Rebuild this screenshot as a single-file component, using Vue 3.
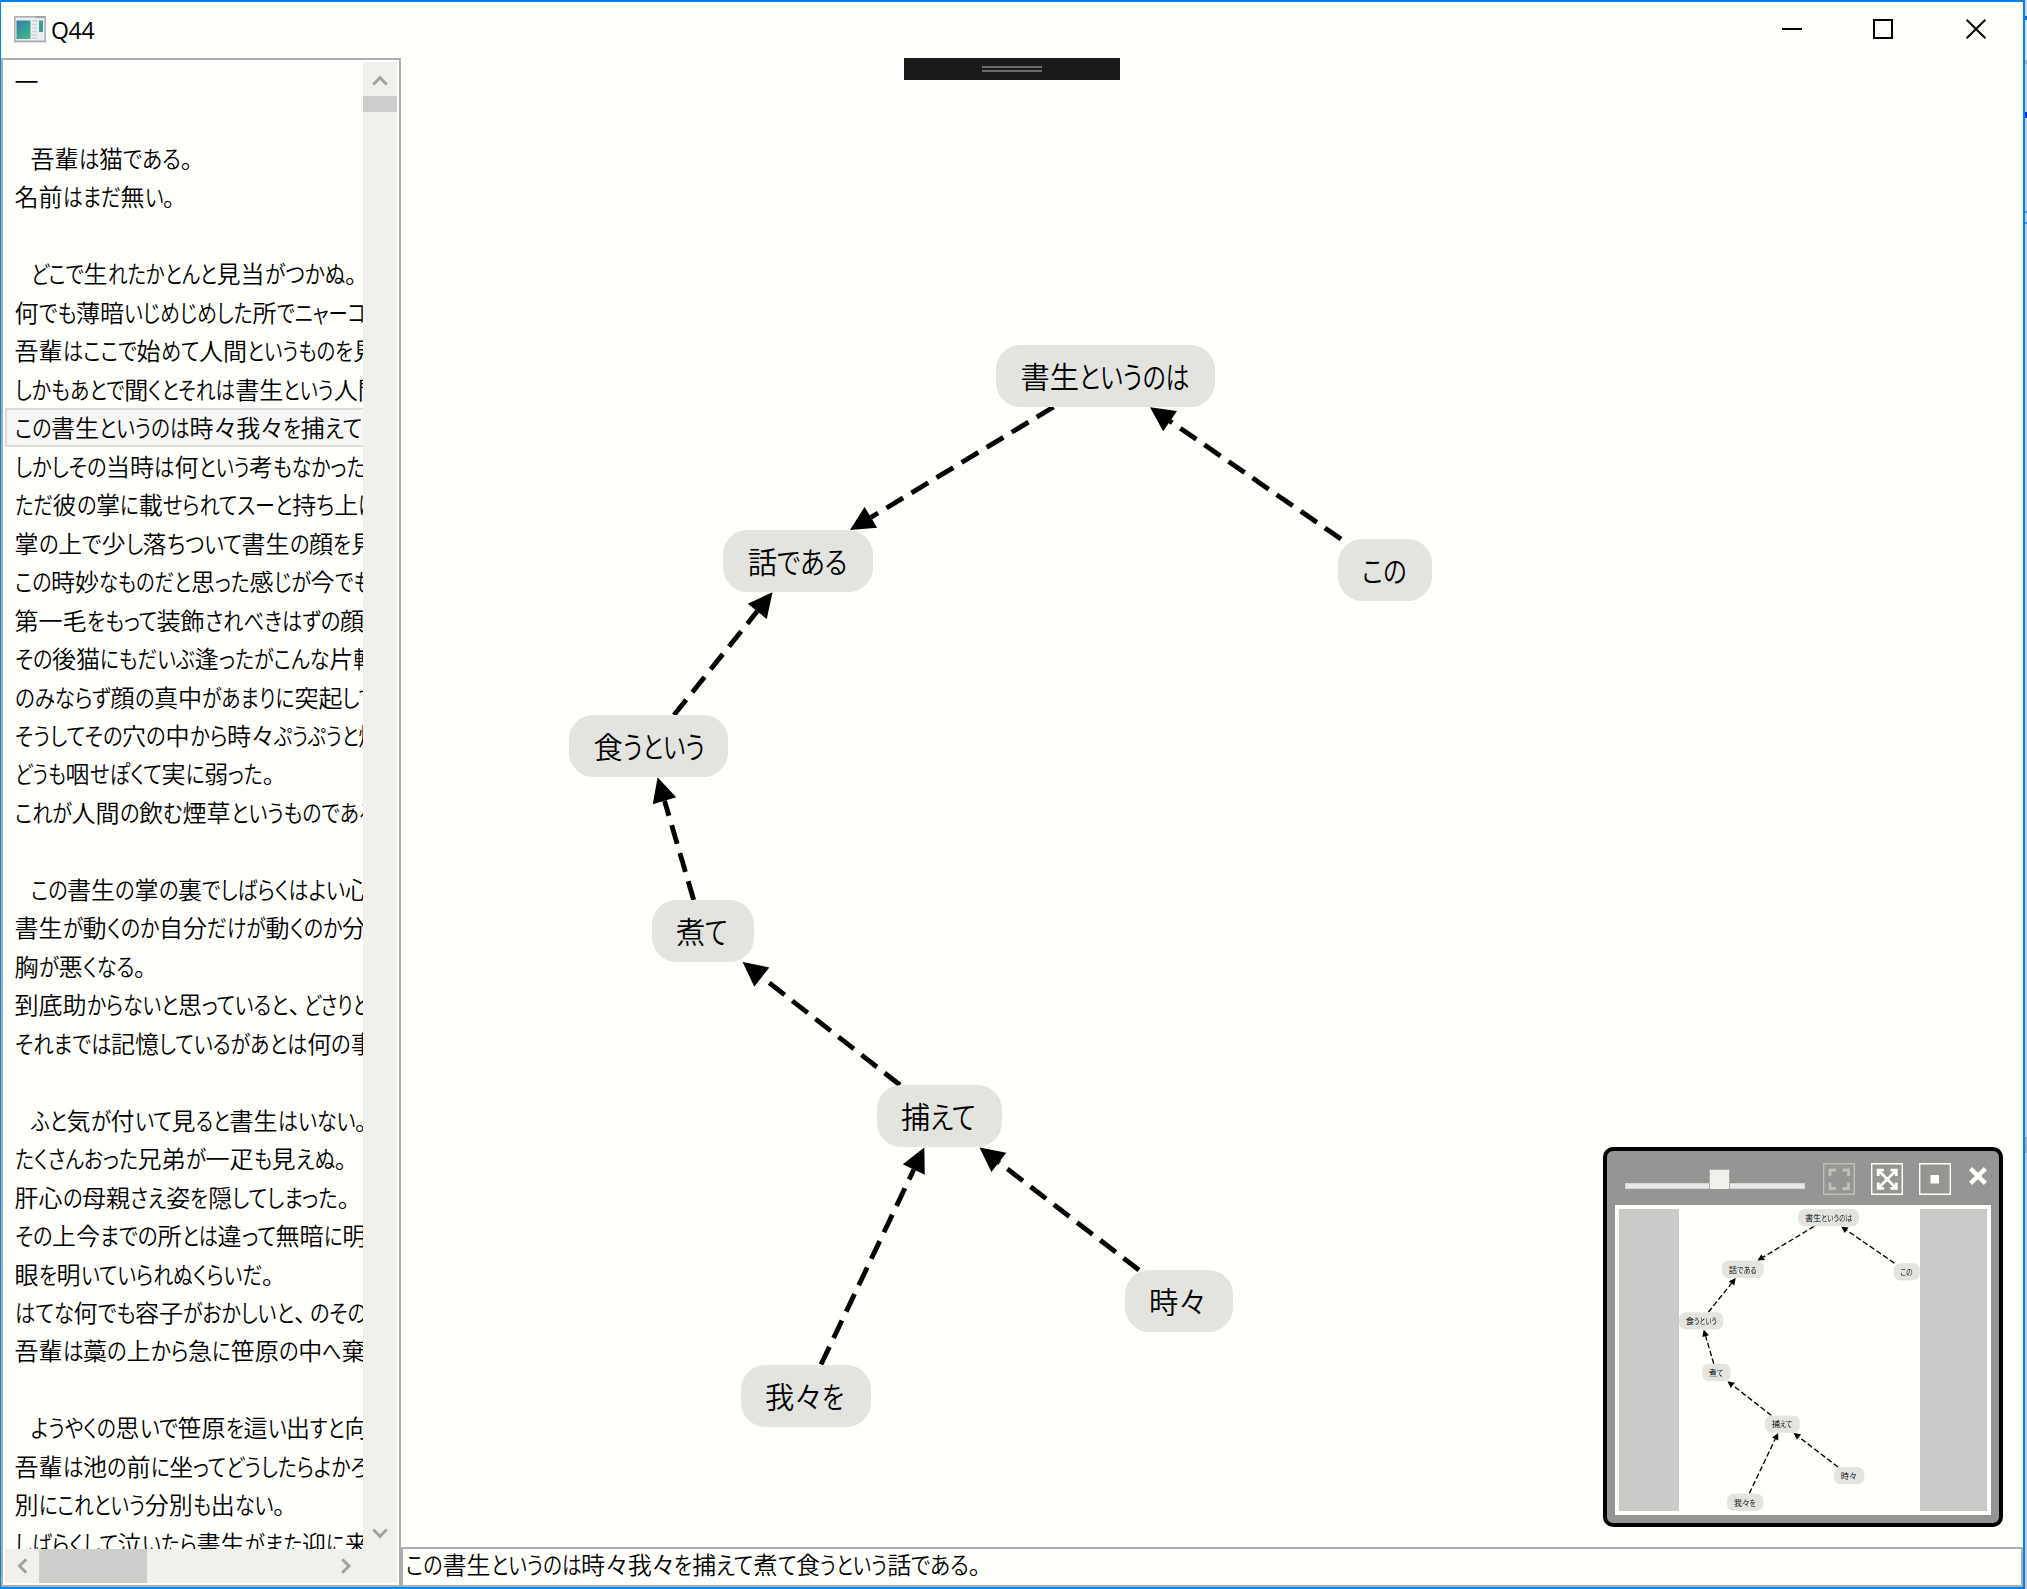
<script setup>
import { h, onMounted, ref } from 'vue'

const root = ref(null)

// Advance widths of the UI kana, for a 24px font size.
const advance = {
  と: 15.5, う: 16.5, く: 13, い: 18.5, こ: 17, の: 19.5, は: 20.5, で: 19.5, あ: 19.7, る: 18.5,
  も: 18, め: 20, じ: 17, し: 17, た: 19, だ: 19, て: 18.5, を: 18, か: 20, そ: 18, れ: 20, な: 20,
  っ: 15.5, に: 18.7, せ: 20.5, ら: 17.5, ち: 18, つ: 20, が: 20, さ: 17.5, べ: 19.5, き: 19.5,
  ず: 19, ぶ: 20.5, ん: 19, み: 20, り: 15.5, ぷ: 18, ぽ: 20, む: 19.5, え: 18.8, ば: 20, よ: 17,
  け: 19.5, ど: 16.5, ふ: 20.5, お: 20, ぬ: 20.5, や: 19, す: 19, ろ: 17.5, へ: 19.5, ま: 18.5,
  ニ: 18.5, ャ: 15.5, ー: 18, コ: 17.5, ス: 19.5,
}

// Splits a line into kana, punctuation and kanji runs; kana runs are condensed on mount.
const Jp = (props) =>
  h('span', { class: 'jp' }, (props.text.match(/[\u3040-\u30ff]+|[、。]|[^、。\u3040-\u30ff]+/g) || []).map((run) => {
    if (/[、。]/.test(run)) return h('span', { class: 'punct' }, run)
    if (!/[\u3040-\u30ff]/.test(run)) return h('span', run)
    const em = [...run].reduce((sum, c) => sum + (advance[c] || 19), 0) / 24
    return h('span', { class: 'kana', 'data-em': em }, run)
  }))
Jp.props = ['text']

const nodes = [
  { text: '書生というのは', x: 996, y: 345, w: 219 },
  { text: 'この', x: 1338, y: 539.3, w: 93.5 },
  { text: '話である', x: 723.3, y: 530, w: 149.6 },
  { text: '食うという', x: 569, y: 715, w: 159 },
  { text: '煮て', x: 651.7, y: 900, w: 102 },
  { text: '捕えて', x: 876.7, y: 1085, w: 125 },
  { text: '時々', x: 1124.6, y: 1270, w: 108 },
  { text: '我々を', x: 740.5, y: 1364.8, w: 130.5 },
]

const edges = [
  [1053.5, 407, 850, 530],
  [1341, 539, 1150, 407.3],
  [674, 715, 772.5, 592.3],
  [693.7, 900, 657.6, 777.3],
  [900, 1085, 742.6, 962],
  [821, 1364.5, 924.3, 1147.5],
  [1139, 1270, 979.5, 1147.5],
]

const shapes = edges.map(([x1, y1, x2, y2]) => {
  const len = Math.hypot(x2 - x1, y2 - y1)
  const ux = (x2 - x1) / len
  const uy = (y2 - y1) / len
  const bx = x2 - ux * 24.4
  const by = y2 - uy * 24.4
  return {
    x1, y1, x2: bx, y2: by,
    head: `${x2},${y2} ${bx - uy * 12.2},${by + ux * 12.2} ${bx + uy * 12.2},${by - ux * 12.2}`,
  }
})

// Both views share one set of nodes; ox/oy is the view's origin.
const Graph = (props) =>
  h('div', { class: 'graph' }, [
    h('svg', { class: 'edges', width: 1622, height: 1489, viewBox: `${props.ox} ${props.oy} 1622 1489` },
      shapes.flatMap((s) => [
        h('line', { x1: s.x1, y1: s.y1, x2: s.x2, y2: s.y2 }),
        h('polygon', { points: s.head }),
      ])),
    ...nodes.map((n) =>
      h('div', { class: 'node', style: { left: n.x - props.ox + 'px', top: n.y - props.oy + 'px', width: n.w + 'px' } },
        [h(Jp, { text: n.text })])),
  ])
Graph.props = ['ox', 'oy']

const lines = [
  '一', '', '>吾輩は猫である。', '名前はまだ無い。', '',
  '>どこで生れたかとんと見当がつかぬ。',
  '何でも薄暗いじめじめした所でニャーコ',
  '吾輩はここで始めて人間というものを見',
  'しかもあとで聞くとそれは書生という人間',
  'この書生というのは時々我々を捕えて',
  'しかしその当時は何という考もなかった',
  'ただ彼の掌に載せられてスーと持ち上げ',
  '掌の上で少し落ちついて書生の顔を見',
  'この時妙なものだと思った感じが今でも',
  '第一毛をもって装飾されべきはずの顔',
  'その後猫にもだいぶ逢ったがこんな片輪',
  'のみならず顔の真中があまりに突起して',
  'そうしてその穴の中から時々ぷうぷうと煙',
  'どうも咽せぽくて実に弱った。',
  'これが人間の飲む煙草というものである',
  '',
  '>この書生の掌の裏でしばらくはよい心',
  '書生が動くのか自分だけが動くのか分',
  '胸が悪くなる。',
  '到底助からないと思っていると、どさりと',
  'それまでは記憶しているがあとは何の事',
  '',
  '>ふと気が付いて見ると書生はいない。',
  'たくさんおった兄弟が一疋も見えぬ。',
  '肝心の母親さえ姿を隠してしまった。',
  'その上今までの所とは違って無暗に明',
  '眼を明いていられぬくらいだ。',
  'はてな何でも容子がおかしいと、のその',
  '吾輩は藁の上から急に笹原の中へ棄',
  '',
  '>ようやくの思いで笹原を這い出すと向',
  '吾輩は池の前に坐ってどうしたらよかろ',
  '別にこれという分別も出ない。',
  'しばらくして泣いたら書生がまた迎に来',
]
const selected = 9

onMounted(() => {
  for (const el of root.value.querySelectorAll('.kana')) {
    const natural = parseFloat(getComputedStyle(el).width)
    const target = el.dataset.em * parseFloat(getComputedStyle(el.parentElement).fontSize)
    el.style.transform = `scaleX(${target / natural})`
    el.style.marginRight = `${target - natural}px`
  }
})
</script>

<template>
  <div ref="root" class="desktop">
    <div class="window">
      <header class="titlebar">
        <svg class="app-icon" width="32" height="27" viewBox="0 0 32 27">
          <defs>
            <linearGradient id="pane" x1="0" y1="0" x2="0.6" y2="1">
              <stop offset="0" stop-color="#3a7aa8" />
              <stop offset="0.5" stop-color="#379a9b" />
              <stop offset="1" stop-color="#3db489" />
            </linearGradient>
          </defs>
          <rect x="0.8" y="0.8" width="30.400" height="24.600" fill="#eceff2" stroke="#a9acb6" stroke-width="1.500" />
          <path d="M0 25.500h32" stroke="#a9abb0" stroke-width="1.500" />
          <path d="M21 1h10" stroke="#9a9da4" stroke-width="1.400" />
          <rect x="2.500" y="4.500" width="14" height="18.500" fill="url(#pane)" />
          <path d="M18 5h5.500M18 8.500h5.500M18 12h5.500M18 15.500h5.500M18 19h5.500M18 22h5.500" stroke="#cfd3d6" stroke-width="1.300" />
          <rect x="25" y="4.500" width="4" height="11.500" fill="#37a08e" />
        </svg>
        <span class="title">Q44</span>
        <div class="controls">
          <svg width="20" height="20" viewBox="0 0 20 20"><path d="M0 10h20" /></svg>
          <svg width="20" height="20" viewBox="0 0 20 20"><path d="M1 1h18v18H1z" /></svg>
          <svg width="20" height="20" viewBox="0 0 20 20"><path d="M.6.6l18.800 18.800M19.400.6L.6 19.400" stroke-width="1.800" /></svg>
        </div>
      </header>

      <div class="body">
        <aside class="list">
          <div class="row">
            <div class="items">
              <div v-for="(line, i) in lines" :key="i" class="item" :class="{ selected: i === selected, indent: line[0] === '>' }">
                <Jp :text="line.replace('>', '')" />
              </div>
            </div>
            <div class="vscroll">
              <svg width="34" height="34" viewBox="0 0 34 34"><path d="M10.300 22.500L17 15.700L23.700 22.500" /></svg>
              <div class="vthumb"></div>
              <svg class="down" width="34" height="34" viewBox="0 0 34 34"><path d="M10.300 14.500L17 21.300L23.700 14.500" /></svg>
            </div>
          </div>
          <div class="hscroll">
            <svg width="34" height="34" viewBox="0 0 34 34"><path d="M21.300 10.300L14.500 17L21.300 23.700" /></svg>
            <div class="hthumb"></div>
            <svg class="right" width="34" height="34" viewBox="0 0 34 34"><path d="M13.200 10.300L20 17L13.200 23.700" /></svg>
          </div>
        </aside>

        <main class="main">
          <section class="canvas">
            <Graph :ox="401" :oy="58" />
            <div class="debugbar"><i></i><i></i></div>
            <div class="overview">
              <div class="tools">
                <div class="slider"><div class="thumb"></div></div>
                <svg class="tool dim" width="32" height="32" viewBox="0 0 32 32">
                  <path class="frame" d="M.7.7h30.600v30.600H.7z" />
                  <path class="glyph" d="M7 13V7h6M19.500 7h6v6M25.500 19.500v6h-6M13 25.500H7v-6" />
                </svg>
                <svg class="tool" width="32" height="32" viewBox="0 0 32 32">
                  <path class="frame" d="M.7.7h30.600v30.600H.7z" />
                  <path class="glyph" d="M8 8l16.500 16.500M24.500 8L8 24.500" />
                  <path class="glyph" d="M7.200 13V7.200H13M19.500 7.200h5.800V13M25.300 19.500v5.800h-5.800M13 25.300H7.200v-5.800" />
                </svg>
                <svg class="tool" width="32" height="32" viewBox="0 0 32 32">
                  <path class="frame" d="M.7.7h30.600v30.600H.7z" />
                  <rect x="11.500" y="12" width="8.500" height="8.500" fill="#fffffb" />
                </svg>
                <svg class="close" width="20" height="20" viewBox="0 0 20 20"><path d="M2.600 2.600l14.800 14.800M17.400 2.600L2.600 17.400" /></svg>
              </div>
              <div class="map">
                <div class="extent">
                  <div class="mini"><Graph :ox="569" :oy="345" /></div>
                </div>
              </div>
            </div>
          </section>
          <div class="sentence"><Jp text="この書生というのは時々我々を捕えて煮て食うという話である。" /></div>
        </main>
      </div>
    </div>
    <div class="behind"></div>
  </div>
</template>

<style>
body {
  margin: 0;
  overflow: hidden;
}
.jp {
  white-space: pre;
  font-feature-settings: "palt";
}
.kana {
  display: inline-block;
  transform-origin: 0 50%;
}
.punct {
  margin-right: -0.35em;
  font-feature-settings: normal;
}
.graph {
  position: relative;
}
.edges {
  position: absolute;
  left: 0;
  top: 0;
}
.edges line {
  stroke: #000;
  stroke-width: 4.88;
  stroke-dasharray: 19.52 9.76;
}
.node {
  position: absolute;
  box-sizing: border-box;
  height: 62px;
  padding-left: 24.400px;
  border-radius: 24.400px;
  background: #e3e4e0;
  font-size: 29.300px;
  line-height: 60px;
}
</style>

<style scoped>
.desktop {
  display: flex;
  width: 2027px;
  height: 1589px;
  overflow: hidden;
  background: #fffffb;
  color: #000;
  font-family: "Noto Sans CJK JP", sans-serif;
  font-weight: 350;
}
.window {
  box-sizing: border-box;
  display: flex;
  flex-direction: column;
  width: 2025px;
  height: 1589px;
  border: 2px solid #0083ec;
  border-left-width: 1px;
}
.behind {
  width: 2px;
  background: linear-gradient(#d8d8d8 16px, #1a6fc0 16px 20px, #dcdcdc 20px 60px, #aeb0b2 60px 64px, #d0d0d0 64px 112px, #1230f0 112px 118px, #cbcbcd 118px 211px, #4a90e8 211px 213px, #cbcbcd 213px 222px, #4a90e8 222px 224px, #cbcbcd 224px 1137px, #a9a9b0 1137px 1153px, #c4c4c8 1153px);
}
.titlebar {
  display: flex;
  align-items: center;
  height: 56px;
}
.app-icon {
  margin: 0 0 2px 13px;
}
.title {
  margin-left: 5px;
  font: 400 23px/54px "Open Sans", sans-serif;
  letter-spacing: -0.3px;
}
.controls {
  display: flex;
  gap: 71px;
  margin: 0 37px 0 auto;
  padding-bottom: 2px;
}
.controls svg:last-child {
  margin-left: 2px;
}
.controls path {
  fill: none;
  stroke: #000;
  stroke-width: 2;
}
.body {
  display: flex;
  flex: 1;
  min-height: 0;
}
.list {
  box-sizing: border-box;
  display: flex;
  flex-direction: column;
  width: 400px;
  padding: 2px;
  border: 2px solid #abadb0;
}
.row {
  display: flex;
  height: 1487px;
}
.items {
  width: 358px;
  overflow: hidden;
}
.item {
  box-sizing: border-box;
  height: 38.480px;
  width: 900px;
  padding-left: 9.500px;
  font-size: 24px;
  line-height: 37px;
}
.indent {
  padding-left: 25.500px;
}
.selected {
  padding-left: 7.500px;
  border: 2px solid #dadad9;
  background: #f6f6f4;
  line-height: 33px;
}
.vscroll {
  display: flex;
  flex-direction: column;
  width: 34px;
  background: #f0f0ec;
}
.vthumb {
  height: 16px;
  background: #cdcdcb;
}
.down {
  margin-top: auto;
}
.hscroll {
  display: flex;
  height: 34px;
  background: #f0f0ec;
}
.hthumb {
  width: 108px;
  background: #cdcdcb;
}
.right {
  margin: 0 34px 0 auto;
}
.vscroll path,
.hscroll path {
  fill: none;
  stroke: #a2a2a0;
  stroke-width: 3;
}
.main {
  display: flex;
  flex: 1;
  flex-direction: column;
}
.canvas {
  position: relative;
  height: 1489px;
  overflow: hidden;
}
.debugbar {
  position: absolute;
  top: 0;
  left: 503px;
  box-sizing: border-box;
  display: flex;
  flex-direction: column;
  gap: 2px;
  align-items: center;
  width: 216px;
  height: 22px;
  padding-top: 8px;
  background: #1b1b1b;
}
.debugbar i {
  width: 60px;
  height: 2px;
  background: #6b6b69;
}
.overview {
  position: absolute;
  left: 1202px;
  top: 1089px;
  box-sizing: border-box;
  width: 400px;
  height: 380px;
  padding: 0 8px;
  border: 4px solid #000;
  border-radius: 10px;
  background: #959593;
}
.tools {
  display: flex;
  height: 54px;
  padding-left: 10px;
}
.slider {
  box-sizing: border-box;
  flex: none;
  width: 180px;
  height: 6px;
  margin: 32px 18px 0 0;
  border: 1px solid #d6d6d5;
  background: #e7e9e8;
}
.thumb {
  box-sizing: border-box;
  width: 21px;
  height: 20px;
  margin: -15px 0 0 82.500px;
  border: 1.500px solid #acacaa;
  border-bottom: 0;
  background: #f0f0ec;
}
.tool {
  flex: none;
  margin: 12px 16px 0 0;
}
.tool path {
  fill: none;
  stroke: #fffffb;
}
.tool .frame {
  stroke-width: 1.400;
}
.tool .glyph {
  stroke-width: 2.800;
}
.dim {
  opacity: 0.4;
}
.close {
  flex: none;
  margin: 15px 0 0 1px;
}
.close path {
  stroke: #fffffb;
  stroke-width: 4.400;
}
.map {
  box-sizing: border-box;
  width: 376px;
  height: 310px;
  padding-left: 60px;
  border: 4px solid #fffffb;
  background: #cacac8;
}
.extent {
  width: 240.500px;
  height: 302px;
  overflow: hidden;
  background: #fffffb;
}
.mini {
  width: 862px;
  height: 1082px;
  transform: scale(0.279);
  transform-origin: 0 0;
}
.sentence {
  box-sizing: border-box;
  height: 40px;
  padding-left: 3px;
  border: 2px solid #abadb0;
  font-size: 24px;
  line-height: 30px;
}
</style>
